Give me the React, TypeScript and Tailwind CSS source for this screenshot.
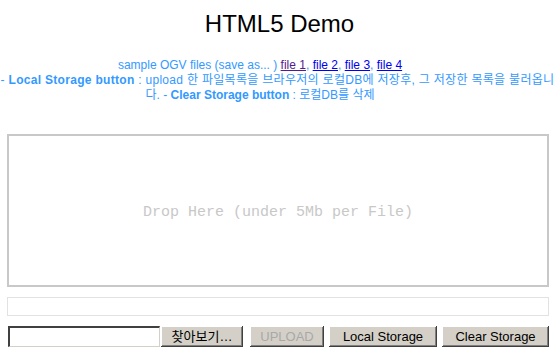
const sans = "font-['Liberation_Sans','Noto_Sans_CJK_KR',sans-serif]";

// 윈도우 클래식 버튼 모양
const btn =
  "h-[21px] bg-[#d4d0c8] text-[13px] leading-none flex items-center justify-center shadow-[inset_-1px_-1px_#404040,inset_1px_1px_#ffffff,inset_-2px_-2px_#808080]";

export default function App() {
  return (
    <div className={`w-[559px] h-[359px] bg-white overflow-hidden ${sans}`}>
      {/* 제목 */}
      <h1 className="pt-[10px] text-center text-[24px] leading-[28px] text-black font-normal">
        HTML5 Demo
      </h1>

      {/* 설명 */}
      <div className="mt-[20px] text-[12px] leading-[15px] text-[#3399ff] whitespace-nowrap">
        <div className="w-[520px] text-center">
          sample OGV files (save as... ){' '}
          <a href="#" className="text-[#551a8b] underline">file 1</a>,{' '}
          <a href="#" className="text-[#0000ee] underline">file 2</a>,{' '}
          <a href="#" className="text-[#0000ee] underline">file 3</a>,{' '}
          <a href="#" className="text-[#0000ee] underline">file 4</a>
        </div>
        <div className="w-[555px] text-center tracking-[0.3px]">
          - <b>Local Storage button</b> : upload 한 파일목록을 브라우저의 로컬DB에 저장후, 그 저장한 목록을 불러옵니
        </div>
        <div className="w-[520px] text-center">
          다. - <b>Clear Storage button</b> : 로컬DB를 삭제
        </div>
      </div>

      <div className="px-[7px] pr-[10px]">
        {/* 드롭 영역 */}
        <div className="mt-[31px] h-[153px] pt-[6px] border-2 border-[#c8c8c8] flex items-center justify-center">
          <span className="font-['Liberation_Mono',monospace] text-[15px] text-[#c8c8c8]">
            Drop Here (under 5Mb per File)
          </span>
        </div>

        {/* 진행 표시줄 */}
        <div className="mt-[10px] h-[19px] border border-[#e2e2e2]" />

        {/* 하단 컨트롤 */}
        <div className="mt-[10px] flex items-center">
          <div className="ml-[1px] w-[152px] h-[21px] bg-white border-t-2 border-l-2 border-t-[#404040] border-l-[#404040] border-b border-r border-b-[#d4d0c8] border-r-[#d4d0c8]" />
          <button className={`${btn} ml-[1px] w-[82px] text-black`}>찾아보기…</button>
          <button className={`${btn} ml-[7px] w-[74px] text-[#a8a8a8]`} disabled>
            UPLOAD
          </button>
          <button className={`${btn} ml-[5px] w-[108px] text-black`}>Local Storage</button>
          <button className={`${btn} ml-[5px] w-[107px] text-black`}>Clear Storage</button>
        </div>
      </div>
    </div>
  );
}
